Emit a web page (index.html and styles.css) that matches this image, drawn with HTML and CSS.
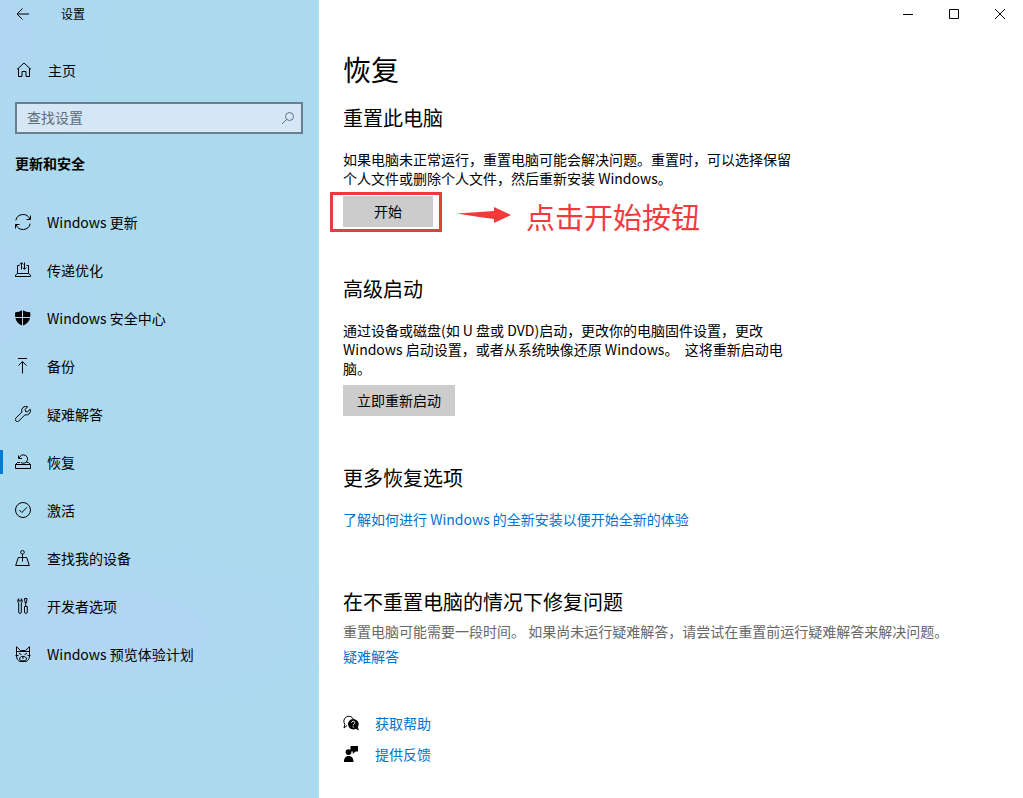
FILE: index.html
```html
<!DOCTYPE html>
<html lang="zh-CN">
<head>
<meta charset="utf-8">
<meta name="viewport" content="width=device-width, initial-scale=1">
<title>设置</title>
<link rel="stylesheet" href="styles.css">
</head>
<body>
<div class="window">
  <aside class="sidebar">
    <header class="titlebar">
      <button class="back" type="button" aria-label="返回">
        <svg class="icon" viewBox="0 0 16 16"><path d="M14 8H2M7.500 2.500L2 8l5.500 5.500"/></svg>
      </button>
      <span class="app-name">设置</span>
    </header>
    <a class="home" href="#">
      <svg class="icon" viewBox="0 0 16 16"><path d="M1 7.500L8 1l7 6.500M2.500 6.300v8.200h3.500V9.500h4v5h3.500V6.300"/></svg>
      <span>主页</span>
    </a>
    <label class="search">
      <input class="search-input" type="text" placeholder="查找设置" aria-label="查找设置">
      <svg class="search-icon" viewBox="0 0 14 14"><circle cx="8.500" cy="5.500" r="4"/><path d="M5.600 8.400L1 13"/></svg>
    </label>
    <h2 class="group">更新和安全</h2>
    <nav class="nav">
      <a class="nav-item" href="#"><svg class="icon" viewBox="0 0 16 16"><path d="M.8 6.300A7.400 7.400 0 0 1 14.900 5.200M15.200 9.700A7.400 7.400 0 0 1 1.100 10.800"/><path d="M15.500 1.500v4h-4M.5 14.500v-4h4"/></svg><span>Windows 更新</span></a>
      <a class="nav-item" href="#"><svg class="icon" viewBox="0 0 16 16"><path d="M4.500 3.500h-2v8M11.500 3.500h2v8M2.500 11.500L.5 13v1.500h15V13l-2-1.500zM6.500 7.500V.700M4.700 2.500l1.800-1.800L8.300 2.500M9.500 .5v6.800M7.700 5.500l1.800 1.800 1.800-1.800"/></svg><span>传递优化</span></a>
      <a class="nav-item" href="#"><svg class="icon" viewBox="0 0 16 16"><path class="solid" d="M7 .3V7H.2C0 5.500 0 4 .2 2.300 3 2.300 5.200 1.600 7 .3zM8 .3c1.800 1.300 4.200 2 7.200 2 .2 1.700.2 3.200 0 4.700H8zM.4 8H7v7.600C3.400 14 1.200 11.800.4 8zM8 8h7c-.8 3.800-3.200 6-7 7.600z"/></svg><span>Windows 安全中心</span></a>
      <a class="nav-item" href="#"><svg class="icon" viewBox="0 0 16 16"><path d="M3 .5h9M7.500 15.500V3.600M3.500 7.600l4-4 4 4"/></svg><span>备份</span></a>
      <a class="nav-item" href="#"><svg class="icon" viewBox="0 0 16 16"><path d="M12.700.8a4.200 4.200 0 0 0-5.800 5.300L.9 12a1.900 1.900 0 0 0 2.900 3l6.200-6.200A4.200 4.200 0 0 0 15.200 3.300l-2.600 2.500-2.100-.3-.3-2.200z"/></svg><span>疑难解答</span></a>
      <a class="nav-item current" href="#" aria-current="page"><svg class="icon" viewBox="0 0 16 16"><path d="M.5 10.500h15v4H.5zM.5 10.500l2-2h2.500M15.500 10.500l-2-2h-2M6 8.500a4.200 4.200 0 1 0-1.700-4.500M3.500 1.500v3H7"/></svg><span>恢复</span></a>
      <a class="nav-item" href="#"><svg class="icon" viewBox="0 0 16 16"><circle cx="8" cy="8" r="7.500"/><path d="M4.300 8l2.500 2.500L12 5.300"/></svg><span>激活</span></a>
      <a class="nav-item" href="#"><svg class="icon" viewBox="0 0 16 16"><circle cx="7.500" cy="2.300" r="1.800"/><path d="M7.500 4v7.500M5.500 7.500H3.300L.7 15.500h13.600l-2.600-8H9.500M5.500 7.500h4"/></svg><span>查找我的设备</span></a>
      <a class="nav-item" href="#"><svg class="icon" viewBox="0 0 16 16"><path d="M3.700.7C2.300 2 2.700 4.400 3.700 5v9.200c0 1.600 2.600 1.600 2.600 0V5c1-.6 1.400-3 0-4.300V3H3.700zM9.500.5h2.500l-.5 4h-1.500zM10.700 4.500v4.300M9.500 8.500h2.800v5.700c0 1.600-2.800 1.600-2.800 0z"/></svg><span>开发者选项</span></a>
      <a class="nav-item" href="#"><svg class="icon" viewBox="0 0 16 16"><path d="M1.500 10V.7l4 3.800h5L14.500.7V10M1.500 5.500h13M.5 9.500h3M12.500 9.500h3M1.500 10c0 2.800 1.300 4.500 3.500 5.500h6c2.200-1 3.500-2.700 3.500-5.500M4 7.500l2.500 1M12 7.500l-2.500 1M4.500 13c0-3.500 7-3.500 7 0 0 2.500-7 2.500-7 0zM7 12h2"/></svg><span>Windows 预览体验计划</span></a>
    </nav>
  </aside>

  <main class="main">
    <div class="window-controls">
      <button class="control" type="button" aria-label="最小化"><svg viewBox="0 0 11 11"><path d="M0 5.500h10"/></svg></button>
      <button class="control" type="button" aria-label="最大化"><svg viewBox="0 0 11 11"><path d="M.5.5h9v9h-9z"/></svg></button>
      <button class="control" type="button" aria-label="关闭"><svg viewBox="0 0 11 11"><path d="M0 0l10 10M10 0L0 10"/></svg></button>
    </div>
    <div class="content">
      <h1 class="page-title">恢复</h1>

      <section class="section reset">
        <h2 class="heading">重置此电脑</h2>
        <p class="text">如果电脑未正常运行，重置电脑可能会解决问题。重置时，可以选择保留个人文件或删除个人文件，然后重新安装 Windows。</p>
        <div class="action-row">
          <div class="highlighted"><button class="button" type="button">开始</button></div>
          <svg class="arrow" viewBox="0 0 54 16"><path d="M0 6.500L37 4V0l17 8-17 8v-4L22 10z"/></svg>
          <span class="annotation">点击开始按钮</span>
        </div>
      </section>

      <section class="section startup">
        <h2 class="heading">高级启动</h2>
        <p class="text">通过设备或磁盘(如 U 盘或 DVD)启动，更改你的电脑固件设置，更改 Windows 启动设置，或者从系统映像还原 Windows。&nbsp; 这将重新启动电脑。</p>
        <button class="button restart" type="button">立即重新启动</button>
      </section>

      <section class="section more">
        <h2 class="heading">更多恢复选项</h2>
        <a class="link" href="#">了解如何进行 Windows 的全新安装以便开始全新的体验</a>
      </section>

      <section class="section fix">
        <h2 class="heading">在不重置电脑的情况下修复问题</h2>
        <p class="note">重置电脑可能需要一段时间。&nbsp;如果尚未运行疑难解答，请尝试在重置前运行疑难解答来解决问题。</p>
        <a class="link" href="#">疑难解答</a>
      </section>

      <footer class="support">
        <a class="support-link" href="#">
          <svg class="icon" viewBox="0 0 16 16"><path d="M4 10.500L1 13l.8-3.800A5 5 0 1 1 10.300 4"/><path class="solid" d="M10.200 4a5.200 5.200 0 1 0 2.600 9.700l3 1.800-.9-3.600A5.200 5.200 0 0 0 10.200 4z"/><path class="mark" d="M8.500 7.700c.2-2 3.500-1.800 3.300.1-.1 1.200-1.600 1.200-1.600 2.600M10.200 11.400v1.200"/></svg>
          <span>获取帮助</span>
        </a>
        <a class="support-link" href="#">
          <svg class="icon" viewBox="0 0 16 16"><path class="solid" d="M7.500 0H15v5.500h-2.500L9.800 8V5.500H7.500zM5.500 3.200a2.900 2.900 0 1 1 0 5.800 2.900 2.900 0 0 1 0-5.800zM1 16c0-3.500 1.300-6 4.700-6s4.800 2.500 4.800 6z"/></svg>
          <span>提供反馈</span>
        </a>
      </footer>
    </div>
  </main>
</div>
</body>
</html>
```

FILE: styles.css
```css
* {
  box-sizing: border-box;
}

body {
  margin: 0;
  font-family: "Noto Sans CJK SC", "Noto Sans", sans-serif;
  font-size: 14px;
  line-height: 20px;
  color: #000;
  background: #fff;
}

h1, h2, p {
  margin: 0;
  font-weight: 400;
}

a {
  color: inherit;
  text-decoration: none;
}

button {
  border: 0;
  padding: 0;
  background: none;
  font: inherit;
  color: inherit;
}

svg {
  display: block;
  flex: none;
  fill: none;
  stroke: currentColor;
}

.window {
  display: grid;
  grid-template-columns: 319px 1fr;
  min-height: 100vh;
}

.sidebar {
  background:
    radial-gradient(ellipse 260px 90px at 30% 79%, #b1d6f3 30%, transparent),
    radial-gradient(ellipse 110px 180px at 0 37%, #b1d6f3 10%, transparent),
    radial-gradient(ellipse 120px 150px at 0 5%, #b1d6f3 10%, transparent),
    #abdaee;
}

.icon {
  width: 16px;
  height: 16px;
}

.icon .solid {
  fill: currentColor;
  stroke: none;
}

.icon .mark {
  stroke: #fff;
}

.titlebar {
  display: flex;
  align-items: center;
  gap: 30px;
  height: 28px;
  padding-left: 15px;
  font-size: 12px;
}

.home {
  display: flex;
  align-items: center;
  gap: 16px;
  height: 48px;
  margin-top: 18px;
  padding-left: 16px;
}

.search {
  display: flex;
  align-items: center;
  height: 32px;
  margin: 8px 16px 0 15px;
  padding: 0 6px 0 10px;
  border: 2px solid #66808f;
  background: #d5e7f5;
  color: #60717e;
}

.search-input {
  flex: 1;
  min-width: 0;
  padding: 0 0 2px;
  border: 0;
  outline: 0;
  background: none;
  font: inherit;
}

.search-input::placeholder {
  color: #5d6c78;
  opacity: 1;
}

.search-icon {
  width: 14px;
  height: 14px;
}

.group {
  margin: 19px 0 25px 15px;
  font-size: 14px;
  font-weight: 700;
}

.nav-item {
  display: flex;
  align-items: center;
  gap: 16px;
  height: 48px;
  padding-left: 15px;
}

.current {
  background: linear-gradient(#0078d7, #0078d7) left center / 3px 24px no-repeat;
}

.window-controls {
  display: flex;
  justify-content: flex-end;
  height: 28px;
}

.control {
  display: grid;
  place-items: center;
  width: 46px;
}

.control svg {
  width: 11px;
  height: 11px;
}

.content {
  padding: 19px 24px 0;
}

.page-title {
  font-size: 28px;
  line-height: 44px;
}

.section {
  display: flex;
  flex-direction: column;
  align-items: flex-start;
}

.heading {
  font-size: 20px;
  line-height: 28px;
}

.text {
  max-width: 452px;
  margin-top: 18px;
  line-height: 19px;
}

.reset {
  margin-top: 13px;
}

.action-row {
  display: flex;
  align-items: center;
  margin: 4px 0 0 -13px;
}

.highlighted {
  display: flex;
  padding: 0 6px 2px 10px;
  border: 3px solid #e83c3f;
}

.button {
  min-width: 90px;
  height: 31px;
  padding: 0 14px 1px;
  background: #ccc;
}

.highlighted .button {
  margin-top: 1px;
}

.arrow {
  width: 54px;
  height: 16px;
  margin: 5px 0 0 15px;
  fill: #f5383a;
  stroke: none;
}

.annotation {
  margin: 8px 0 0 15px;
  font-size: 29px;
  line-height: 32px;
  color: #f03c3e;
}

.startup {
  margin-top: 43px;
}

.restart {
  margin-top: 7px;
}

.more {
  margin-top: 48px;
}

.link {
  color: #0074cc;
}

.more .link {
  margin-top: 17px;
}

.fix {
  margin-top: 59px;
}

.note {
  margin: 5px 0;
  color: #686868;
}

.support {
  display: flex;
  flex-direction: column;
  gap: 11px;
  margin-top: 47px;
}

.support-link {
  display: flex;
  align-items: center;
  gap: 16px;
}

.support-link span {
  color: #0074cc;
}
```
